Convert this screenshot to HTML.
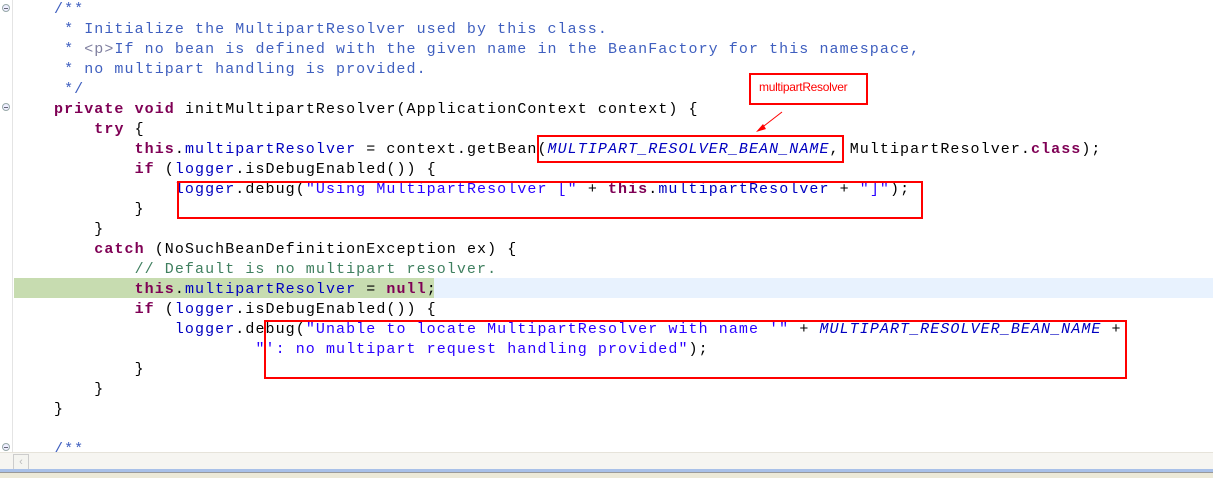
<!DOCTYPE html>
<html><head><meta charset="utf-8"><style>
body{margin:0;width:1213px;height:477px;overflow:hidden;background:#fff;position:relative;font-family:"Liberation Mono",monospace}
.ruler{position:absolute;left:0;top:0;width:12px;height:452px;background:#fff;border-right:1px solid #e4e4e4}
.code{position:absolute;left:54px;top:0px;font-size:15px;letter-spacing:1.07px;line-height:20px;color:#000}
.row{height:20px;white-space:pre}
.k{color:#7f0055;font-weight:bold}.f{color:#0000c0}.c{color:#0000c0;font-style:italic}
.d{color:#3f5fbf}.t{color:#7f7f9f}.g{color:#3f7f5f}.s{color:#2a00ff}
.hl{position:absolute;top:278px;height:20px}
.box{position:absolute;border:2px solid #f00;box-sizing:border-box}
.fold{position:absolute;left:2px;width:8px;height:8px;border-radius:50%;border:1px solid #9aa;background:#eef;box-sizing:border-box}
.fold:after{content:"";position:absolute;left:1px;top:3px;width:4px;height:1px;background:#667}
</style></head><body>
<div class="ruler"></div>
<div class="hl" style="left:14px;width:420px;background:#c7dcb0"></div>
<div class="hl" style="left:434px;width:779px;background:#e8f2fe"></div>
<div class="fold" style="top:4px"></div>
<div class="fold" style="top:103px"></div>
<div class="fold" style="top:443px"></div>
<div class="code"><div class="row d">/**</div><div class="row d"> * Initialize the MultipartResolver used by this class.</div><div class="row d"> * <span class="t">&lt;p&gt;</span>If no bean is defined with the given name in the BeanFactory for this namespace,</div><div class="row d"> * no multipart handling is provided.</div><div class="row d"> */</div><div class="row"><span class="k">private</span> <span class="k">void</span> initMultipartResolver(ApplicationContext context) {</div><div class="row">    <span class="k">try</span> {</div><div class="row">        <span class="k">this</span>.<span class="f">multipartResolver</span> = context.getBean(<span class="c">MULTIPART_RESOLVER_BEAN_NAME</span>, MultipartResolver.<span class="k">class</span>);</div><div class="row">        <span class="k">if</span> (<span class="f">logger</span>.isDebugEnabled()) {</div><div class="row">            <span class="f">logger</span>.debug(<span class="s">"Using MultipartResolver ["</span> + <span class="k">this</span>.<span class="f">multipartResolver</span> + <span class="s">"]"</span>);</div><div class="row">        }</div><div class="row">    }</div><div class="row">    <span class="k">catch</span> (NoSuchBeanDefinitionException ex) {</div><div class="row">        <span class="g">// Default is no multipart resolver.</span></div><div class="row">        <span class="k">this</span>.<span class="f">multipartResolver</span> = <span class="k">null</span>;</div><div class="row">        <span class="k">if</span> (<span class="f">logger</span>.isDebugEnabled()) {</div><div class="row">            <span class="f">logger</span>.debug(<span class="s">"Unable to locate MultipartResolver with name '"</span> + <span class="c">MULTIPART_RESOLVER_BEAN_NAME</span> +</div><div class="row">                    <span class="s">"': no multipart request handling provided"</span>);</div><div class="row">        }</div><div class="row">    }</div><div class="row">}</div><div class="row"> </div><div class="row d">/**</div></div>
<div class="box" style="left:537px;top:135px;width:307px;height:28px"></div>
<div class="box" style="left:177px;top:181px;width:746px;height:38px"></div>
<div class="box" style="left:264px;top:320px;width:863px;height:59px"></div>
<div class="box" style="left:749px;top:73px;width:119px;height:32px;font-family:'Liberation Sans',sans-serif;font-size:12px;color:#f00;padding:5px 0 0 8px;letter-spacing:-0.3px">multipartResolver</div>
<svg style="position:absolute;left:0;top:0" width="1213" height="477">
<line x1="782" y1="112" x2="760" y2="129" stroke="#f00" stroke-width="1"/>
<polygon points="756,132 763,124 766,129" fill="#f00"/>
</svg>
<div style="position:absolute;left:0;top:452px;width:1213px;height:17px;background:#f6f5f1;border-top:1px solid #e6e3da"></div>
<div style="position:absolute;left:13px;top:454px;width:14px;height:14px;border:1px solid #ccc;background:#f4f4f0;color:#bbb;font-size:11px;line-height:14px;text-align:center;font-family:'Liberation Sans',sans-serif">&#8249;</div>
<div style="position:absolute;left:0;top:469px;width:1213px;height:3px;background:#a8c0e8"></div>
<div style="position:absolute;left:0;top:472px;width:1213px;height:5px;background:#ece9d8;border-top:1px solid #999"></div>
</body></html>
